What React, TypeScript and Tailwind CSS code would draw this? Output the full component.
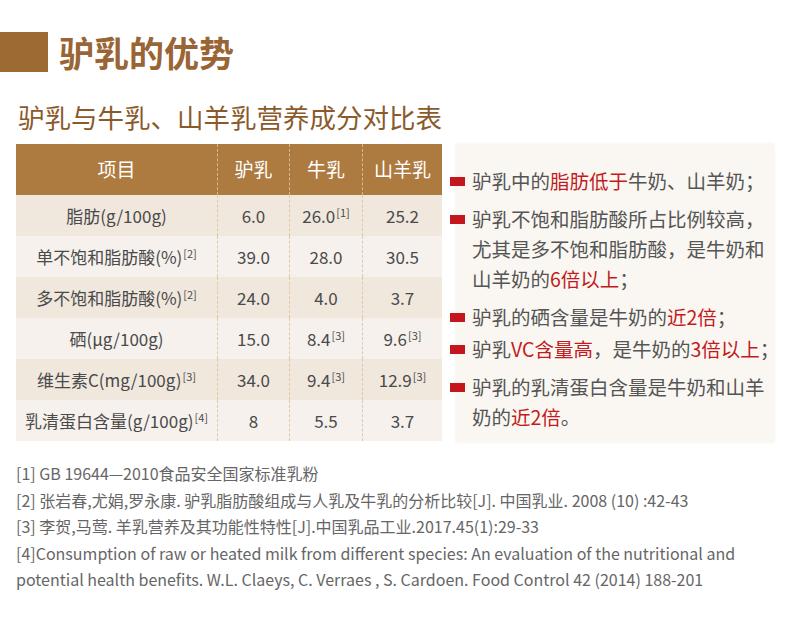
const font = { fontFamily: '"Noto Sans CJK SC", "Noto Sans", sans-serif' }

type Cell = { v: string; sup?: string }

const rows: Cell[][] = [
  [{ v: '脂肪(g/100g)' }, { v: '6.0' }, { v: '26.0', sup: '[1]' }, { v: '25.2' }],
  [{ v: '单不饱和脂肪酸(%)', sup: '[2]' }, { v: '39.0' }, { v: '28.0' }, { v: '30.5' }],
  [{ v: '多不饱和脂肪酸(%)', sup: '[2]' }, { v: '24.0' }, { v: '4.0' }, { v: '3.7' }],
  [{ v: '硒(μg/100g)' }, { v: '15.0' }, { v: '8.4', sup: '[3]' }, { v: '9.6', sup: '[3]' }],
  [{ v: '维生素C(mg/100g)', sup: '[3]' }, { v: '34.0' }, { v: '9.4', sup: '[3]' }, { v: '12.9', sup: '[3]' }],
  [{ v: '乳清蛋白含量(g/100g)', sup: '[4]' }, { v: '8' }, { v: '5.5' }, { v: '3.7' }],
]

const widths = ['w-[201px]', 'w-[72px]', 'w-[73px]', 'w-[80px]']

function Sup({ t }: { t?: string }) {
  if (!t) return null
  return <span className="relative -top-[6px] text-[11px] ml-[1px]">{t}</span>
}

function Bullet({ children, className = '' }: { children: React.ReactNode; className?: string }) {
  return (
    <div className={`flex items-start ${className}`}>
      <span className="mt-[11px] -ml-[6px] mr-[7px] h-[9px] w-[15px] shrink-0 bg-[#c5161d]" />
      <div className="text-[19.5px] leading-[30px] text-[#555] whitespace-nowrap">{children}</div>
    </div>
  )
}

const R = ({ children }: { children: React.ReactNode }) => <span className="text-[#c31a20]">{children}</span>

export default function App() {
  return (
    <div className="w-[790px] h-[634px] bg-white overflow-hidden" style={font}>
      <div className="flex items-center pt-[32px]">
        <div className="h-[40px] w-[48px] bg-[#9e6a33]" />
        <h1 className="ml-[11px] text-[35px] leading-[40px] font-bold text-[#9a6535]">驴乳的优势</h1>
      </div>

      <h2 className="mt-[28px] ml-[18px] text-[26.5px] leading-[34px] text-[#8b5a2b]">驴乳与牛乳、山羊乳营养成分对比表</h2>

      <div className="mt-[10px] flex">
        <div className="ml-[16px] w-[426px]">
          <div className="flex h-[51px] bg-[#ad7a3f] text-white text-[19px]">
            {['项目', '驴乳', '牛乳', '山羊乳'].map((h, i) => (
              <div
                key={h}
                className={`${widths[i]} flex items-center justify-center ${i > 0 ? 'border-l border-dashed border-[#d9b78e]' : ''}`}
              >
                {h}
              </div>
            ))}
          </div>
          {rows.map((r, ri) => (
            <div key={ri} className={`flex h-[41px] text-[17px] text-[#4a4a4a] ${ri % 2 === 0 ? 'bg-[#f0e7dd]' : 'bg-[#f6f1ec]'}`}>
              {r.map((c, i) => (
                <div
                  key={i}
                  className={`${widths[i]} flex items-center justify-center whitespace-nowrap ${i > 0 ? 'border-l border-dashed border-[#e2c8a8]' : ''}`}
                >
                  <span>
                    {c.v}
                    <Sup t={c.sup} />
                  </span>
                </div>
              ))}
            </div>
          ))}
        </div>

        <div className="ml-[14px] w-[318px] h-[298px] bg-[#faf7f2] shadow-[0_0_3px_rgba(0,0,0,0.08)] pt-[22px]">
          <Bullet>
            驴乳中的<R>脂肪低于</R>牛奶、山羊奶；
          </Bullet>
          <Bullet className="mt-[8px]">
            驴乳不饱和脂肪酸所占比例较高，
            <br />
            尤其是多不饱和脂肪酸，是牛奶和
            <br />
            山羊奶的<R>6倍以上</R>；
          </Bullet>
          <Bullet className="mt-[8px]">
            驴乳的硒含量是牛奶的<R>近2倍</R>；
          </Bullet>
          <Bullet className="mt-[2px]">
            驴乳<R>VC含量高</R>，是牛奶的<R>3倍以上</R>；
          </Bullet>
          <Bullet className="mt-[8px]">
            驴乳的乳清蛋白含量是牛奶和山羊
            <br />
            奶的<R>近2倍</R>。
          </Bullet>
        </div>
      </div>

      <div className="mt-[18px] ml-[16px] text-[16px] leading-[26.5px] text-[#666] whitespace-nowrap">
        <div>[1] GB 19644—2010食品安全国家标准乳粉</div>
        <div>[2] 张岩春,尤娟,罗永康. 驴乳脂肪酸组成与人乳及牛乳的分析比较[J]. 中国乳业. 2008 (10) :42-43</div>
        <div>[3] 李贺,马莺. 羊乳营养及其功能性特性[J].中国乳品工业.2017.45(1):29-33</div>
        <div>[4]Consumption of raw or heated milk from different species: An evaluation of the nutritional and</div>
        <div>potential health benefits. W.L. Claeys, C. Verraes , S. Cardoen. Food Control 42 (2014) 188-201</div>
      </div>
    </div>
  )
}
